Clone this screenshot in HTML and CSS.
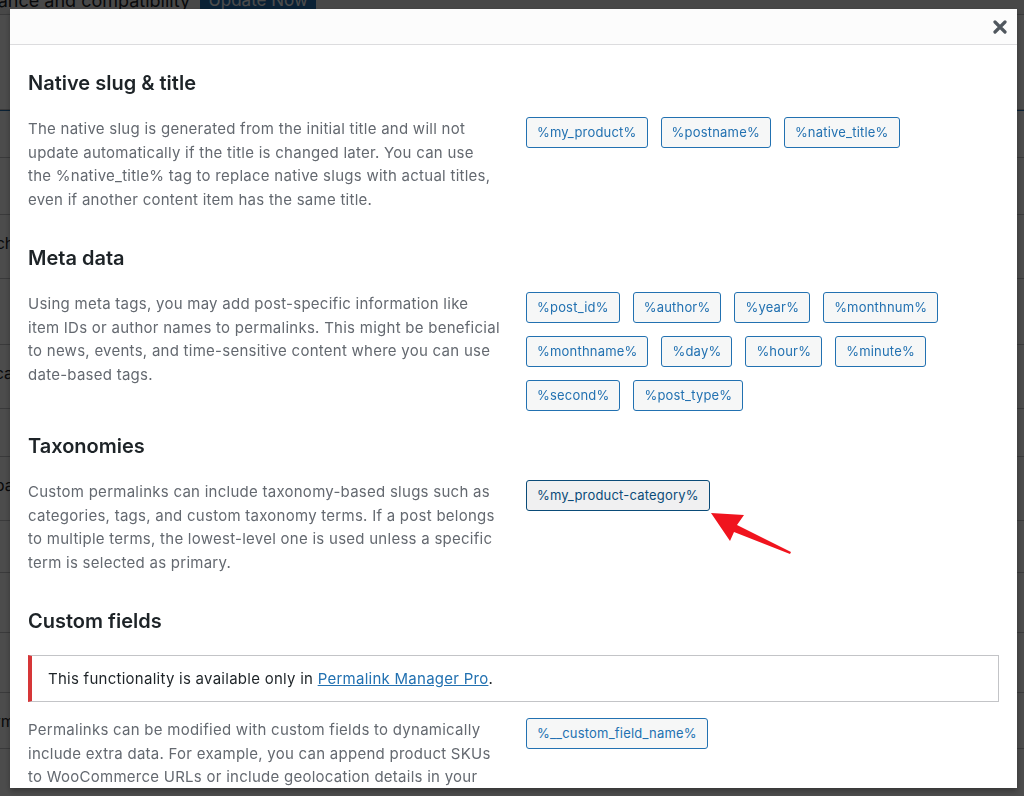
FILE: index.html
```html
<!DOCTYPE html>
<html>
<head>
    <meta charset="UTF-8">
    <meta name="viewport" content="width=device-width, initial-scale=1.0">
    <title>Permalink Manager - Tags</title>
    <link rel="stylesheet" href="styles.css">
</head>
<body>
    <div class="admin">
        <div class="admin-notice">
            <span class="admin-notice-text">for improved performance and compatibility</span>
            <span class="admin-btn">Update Now</span>
        </div>
        <div class="admin-row" style="height: 96px"></div>
        <div class="admin-row admin-row-blue" style="height: 48px"></div>
        <div class="admin-row" style="height: 57px"></div>
        <div class="admin-row" style="height: 64px"><span class="admin-cell">Such<br><u>Ea</u></span></div>
        <div class="admin-row" style="height: 66px"></div>
        <div class="admin-row" style="height: 64px"><span class="admin-cell">Loca</span></div>
        <div class="admin-row" style="height: 48px"></div>
        <div class="admin-row" style="height: 64px"><span class="admin-cell">Toba</span></div>
        <div class="admin-row" style="height: 52px"></div>
        <div class="admin-row" style="height: 60px"><span class="admin-cell">Flo</span></div>
        <div class="admin-row" style="height: 60px"></div>
        <div class="admin-row" style="height: 56px"><span class="admin-cell">Term</span></div>
        <div class="admin-row" style="height: 60px"></div>
    </div>
    <div class="overlay"></div>

    <div class="modal">
        <div class="modal-header">
            <button class="modal-close" aria-label="Close">
                <svg width="14" height="14" viewBox="0 0 14 14">
                    <path d="M2 2 L12 12 M12 2 L2 12" stroke="#50575e" stroke-width="3.2" stroke-linecap="round"/>
                </svg>
            </button>
        </div>
        <div class="modal-body">
            <section class="tag-section">
                <h2>Native slug &amp; title</h2>
                <div class="tag-row">
                    <p class="tag-desc">The native slug is generated from the initial title and will not update automatically if the title is changed later. You can use<br>the %native_title% tag to replace native slugs with actual titles, even if another content item has the same title.</p>
                    <div class="tag-list">
                        <span class="tag">%my_product%</span>
                        <span class="tag">%postname%</span>
                        <span class="tag">%native_title%</span>
                    </div>
                </div>
            </section>

            <section class="tag-section">
                <h2>Meta data</h2>
                <div class="tag-row">
                    <p class="tag-desc">Using meta tags, you may add post-specific information like item IDs or author names to permalinks. This might be beneficial to news, events, and time-sensitive content where you can use date-based tags.</p>
                    <div class="tag-list">
                        <span class="tag">%post_id%</span>
                        <span class="tag">%author%</span>
                        <span class="tag">%year%</span>
                        <span class="tag">%monthnum%</span>
                        <span class="tag">%monthname%</span>
                        <span class="tag">%day%</span>
                        <span class="tag">%hour%</span>
                        <span class="tag">%minute%</span>
                        <span class="tag">%second%</span>
                        <span class="tag">%post_type%</span>
                    </div>
                </div>
            </section>

            <section class="tag-section">
                <h2>Taxonomies</h2>
                <div class="tag-row">
                    <p class="tag-desc">Custom permalinks can include taxonomy-based slugs such as categories, tags, and custom taxonomy terms. If a post belongs to multiple terms, the lowest-level one is used unless a specific term is selected as primary.</p>
                    <div class="tag-list">
                        <span class="tag tag-active">%my_product-category%</span>
                        <svg class="pointer-arrow" width="90" height="56" viewBox="0 0 90 56">
                            <polygon points="6,8 39,10 32,20 86,47 85,49 29,27 25,36" fill="#f0141e"/>
                        </svg>
                    </div>
                </div>
            </section>

            <section class="tag-section">
                <h2>Custom fields</h2>
                <div class="notice-pro">This functionality is available only in <a href="#">Permalink Manager Pro</a>.</div>
                <div class="tag-row">
                    <p class="tag-desc">Permalinks can be modified with custom fields to dynamically include extra data. For example, you can append product SKUs to WooCommerce URLs or include geolocation details in your permalinks.</p>
                    <div class="tag-list">
                        <span class="tag">%__custom_field_name%</span>
                    </div>
                </div>
            </section>
        </div>
    </div>
</body>
</html>
```

FILE: styles.css
```css
* {
    margin: 0;
    padding: 0;
    box-sizing: border-box;
}

body {
    font-family: 'Inter', 'Noto Sans', sans-serif;
    background-color: #f0f0f1;
    height: 100vh;
    overflow: hidden;
    color: #1d2327;
}

/* page behind the dialog */
.admin {
    margin-top: -14px;
}

.admin-notice {
    display: flex;
    align-items: center;
    justify-content: flex-end;
    gap: 10px;
    width: 316px;
    height: 28px;
    white-space: nowrap;
    font-size: 18px;
    color: #1d2327;
}

.admin-btn {
    flex: 0 0 116px;
    background-color: #2271b1;
    color: #fff;
    padding: 4px 0;
    text-align: center;
    font-size: 17px;
}

.admin-row {
    border-bottom: 1px solid #c3c4c7;
    background-color: #fff;
    font-size: 16px;
}

.admin-row:nth-child(2) {
    border-top: 1px solid #c3c4c7;
}

.admin-row-blue {
    border-top: 1px solid #2271b1;
}

.admin-cell {
    display: block;
    margin-left: -24px;
    padding-top: 16px;
    line-height: 24px;
}

.overlay {
    position: fixed;
    inset: 0;
    background-color: rgba(0, 0, 0, 0.7);
}

/* dialog */
.modal {
    position: fixed;
    top: 9px;
    left: 10px;
    width: 1007px;
    height: 779px;
    background-color: #fff;
    overflow: hidden;
    box-shadow: 0 3px 6px rgba(0, 0, 0, 0.3);
}

.modal-header {
    height: 36px;
    background-color: #fcfcfc;
    border-bottom: 1px solid #dcdcde;
    display: flex;
    justify-content: flex-end;
}

.modal-close {
    width: 35px;
    height: 35px;
    border: none;
    background: none;
    display: flex;
    align-items: center;
    justify-content: center;
    cursor: pointer;
}

.modal-body {
    padding: 25px 18px 0 18px;
}

.tag-section h2 {
    font-size: 20px;
    line-height: 26px;
    font-weight: 600;
    color: #1d2327;
    margin-top: 10px;
    margin-bottom: 21px;
}

.tag-section:first-child h2 {
    margin-top: 0;
}

.tag-row {
    display: flex;
    align-items: flex-start;
    gap: 22px;
}

.tag-desc {
    flex: 0 0 476px;
    font-size: 15px;
    line-height: 23.5px;
    letter-spacing: 0.26px;
    color: #646970;
    margin-bottom: 24px;
}

.tag-list {
    position: relative;
    display: flex;
    flex-wrap: wrap;
    gap: 13px;
    padding-bottom: 12px;
}

.tag {
    display: inline-block;
    height: 31px;
    line-height: 29px;
    padding: 0 10px;
    font-size: 13px;
    letter-spacing: 0.2px;
    color: #2271b1;
    background-color: #f6f7f7;
    border: 1px solid #2271b1;
    border-radius: 3px;
    white-space: nowrap;
}

.tag-active {
    background-color: #f0f0f1;
    border-color: #0a4b78;
    color: #0a4b78;
}

/* red pointer drawn over the screenshot */
.pointer-arrow {
    position: absolute;
    left: 179px;
    top: 25px;
}

.notice-pro {
    border: 1px solid #c3c4c7;
    border-left: 4px solid #d63638;
    padding: 11px 16px;
    font-size: 15px;
    line-height: 23px;
    letter-spacing: 0.26px;
    color: #1d2327;
    margin-bottom: 16px;
}

.notice-pro a {
    color: #2271b1;
}
```
